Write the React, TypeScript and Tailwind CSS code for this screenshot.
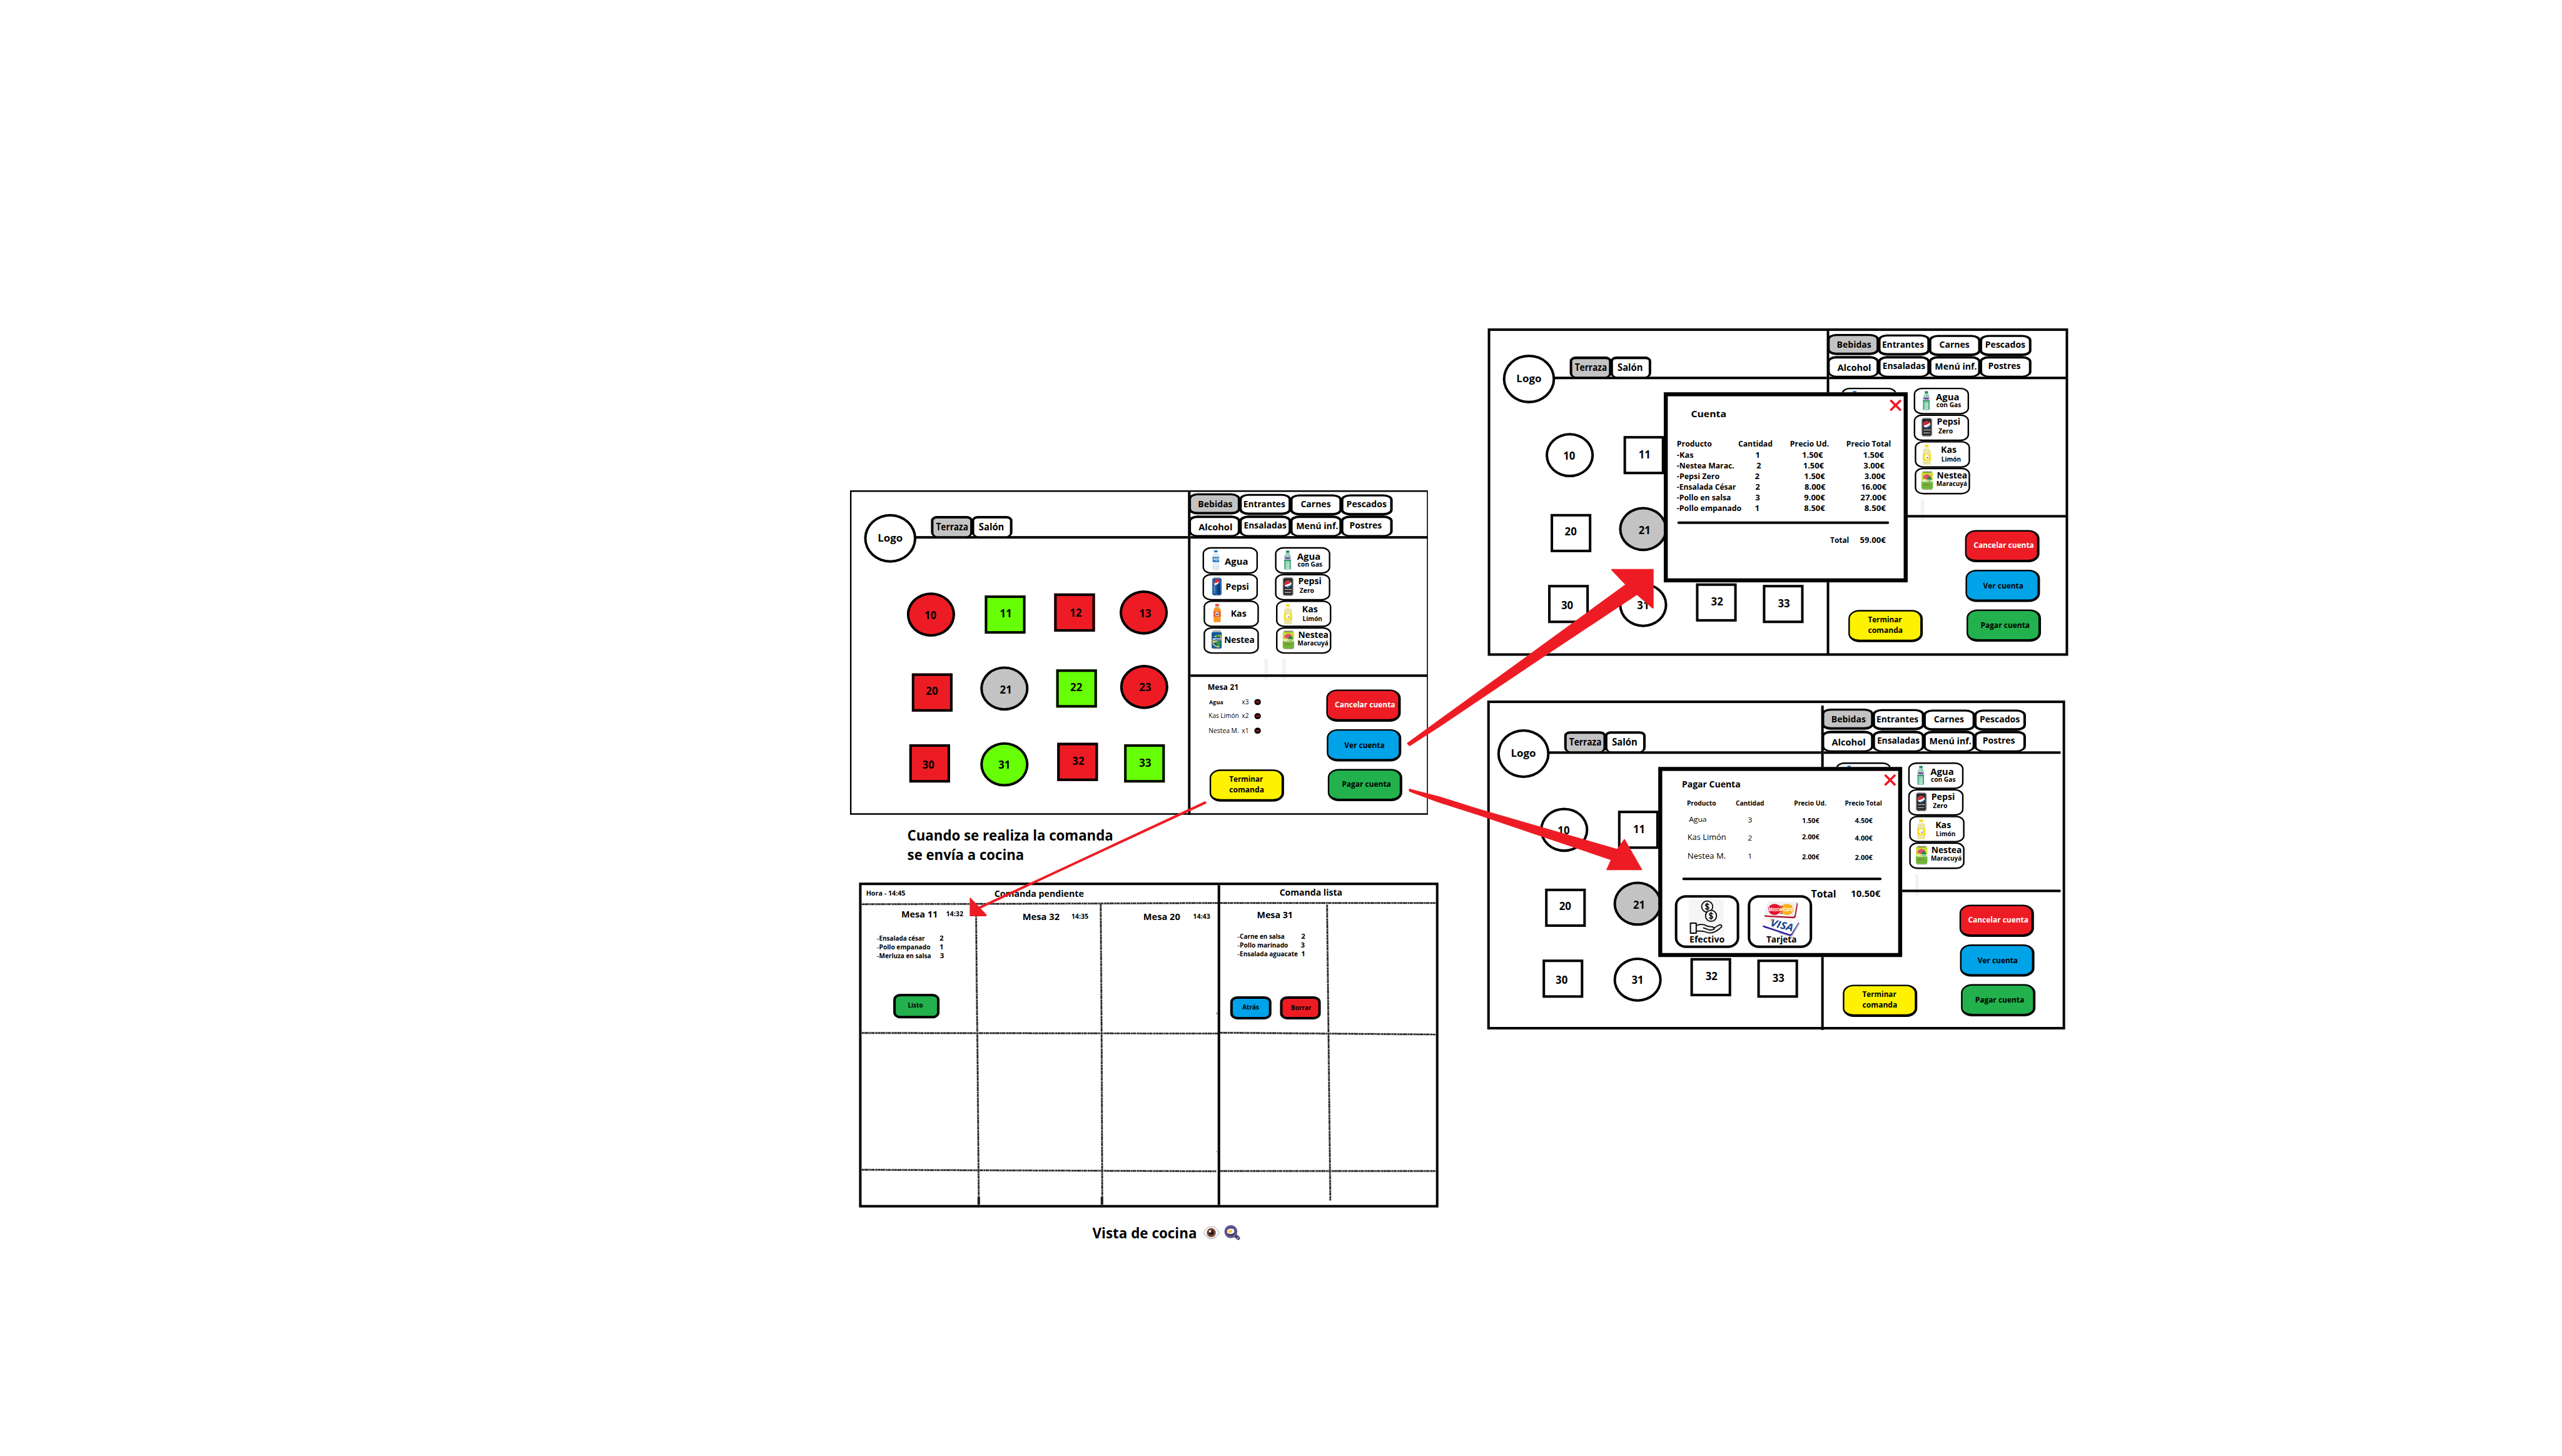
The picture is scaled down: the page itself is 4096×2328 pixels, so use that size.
import { useLayoutEffect, useRef } from "react";
import type { ReactNode } from "react";

/* ---------- text ---------- */

type LabelProps = {
  x?: number; // ink start, from the container's left edge
  b: number; // baseline, from the container's top edge
  s: number; // font size
  w?: number; // ink width the text is fitted to
  className?: string;
  children: string;
};

function Label({ x = 0, b, s, w, className = "font-bold", children }: LabelProps) {
  const outer = useRef<HTMLSpanElement>(null);
  const inner = useRef<HTMLSpanElement>(null);
  const width = w === undefined ? undefined : w + s * 0.09;

  useLayoutEffect(() => {
    if (width === undefined || !outer.current || !inner.current) return;
    inner.current.style.transform = "none";
    const unit = outer.current.getBoundingClientRect().width / width;
    const natural = inner.current.getBoundingClientRect().width / unit;
    inner.current.style.transform = `scaleX(${width / natural})`;
  }, [width]);

  return (
    <span
      ref={outer}
      className="relative col-start-1 row-start-1 block self-start justify-self-start leading-none whitespace-nowrap"
      style={{
        marginLeft: w === undefined ? x : x - s * 0.05,
        marginTop: b - s * 0.888,
        fontSize: s,
        width,
      }}
    >
      <span ref={inner} className={`inline-block origin-left align-top leading-none ${className}`}>
        {children}
      </span>
    </span>
  );
}

/* A sized area whose children share one grid cell: a shape below, labels above. */
function Box({ size, shape, children }: { size: string; shape?: string; children?: ReactNode }) {
  return (
    <div className={`grid shrink-0 ${size}`}>
      {shape && <div className={`col-start-1 row-start-1 border-black ${shape}`} />}
      {children}
    </div>
  );
}

/* ---------- floor plan ---------- */

type Table = { n: string; round?: boolean; x: number; y: number; dx: number; dy: number; color: string };

const tables: Table[] = [
  { n: "10", round: true, x: 113.2, y: 203.1, dx: -1.6, dy: 1.6, color: "bg-[#ed1c24]" },
  { n: "11", x: 268.1, y: 209.2, dx: 1, dy: -0.7, color: "bg-[#66ff05]" },
  { n: "12", x: 406, y: 204.9, dx: 2.5, dy: 1, color: "bg-[#ed1c24]" },
  { n: "13", round: true, x: 536, y: 198.8, dx: 3, dy: 2.8, color: "bg-[#ed1c24]" },
  { n: "20", x: 123, y: 364, dx: -0.7, dy: -1.6, color: "bg-[#ed1c24]" },
  { n: "21", round: true, x: 259.2, y: 350, dx: 2.4, dy: 3.4, color: "bg-[#c3c3c3]" },
  { n: "22", x: 410, y: 355.8, dx: -0.7, dy: -1.2, color: "bg-[#66ff05]" },
  { n: "23", round: true, x: 537, y: 347, dx: 2, dy: 1.6, color: "bg-[#ed1c24]" },
  { n: "30", x: 118, y: 505, dx: -2.5, dy: 3.6, color: "bg-[#ed1c24]" },
  { n: "31", round: true, x: 259, y: 501, dx: 0.4, dy: 1.6, color: "bg-[#66ff05]" },
  { n: "32", x: 412, y: 502, dx: 1.3, dy: -1.2, color: "bg-[#ed1c24]" },
  { n: "33", x: 545, y: 505, dx: 1.8, dy: -0.3, color: "bg-[#66ff05]" },
];

function TablePin({ table, colored }: { table: Table; colored: boolean }) {
  const fill = colored || table.n === "21" ? table.color : "bg-white";
  const cx = table.round ? 48 : 40.5;
  const cy = table.round ? 44 : 38;
  return (
    <div className="absolute" style={{ left: table.x, top: table.y }}>
      <Box
        size={table.round ? "h-[88px] w-[96px]" : "h-[76px] w-[81px]"}
        shape={`border-[5px] ${table.round ? "rounded-[50%]" : ""} ${fill}`}
      >
        <Label x={cx + table.dx - 11} b={cy + table.dy + 7.5} s={21} w={22}>
          {table.n}
        </Label>
      </Box>
    </div>
  );
}

function FloorPlan({ colored }: { colored: boolean }) {
  return (
    <div className="relative w-[672px] shrink-0">
      <div className="ml-[131px] flex h-[96px] items-start border-b-[5px] border-black pt-[51px] pl-[30px]">
        <Box
          size="h-[42px] w-[83px]"
          shape="rounded-[12px/9px] border-[5px] border-b-[2px] bg-[#c3c3c3]"
        >
          <Label x={11} b={29.8} s={19} w={62.5}>Terraza</Label>
        </Box>
        <div className="-ml-[2px]">
          <Box size="h-[42px] w-[81px]" shape="rounded-[12px/9px] border-[5px] border-b-[2px] bg-white">
            <Label x={15} b={29.4} s={19} w={48.7}>Salón</Label>
          </Box>
        </div>
      </div>
      <div className="absolute top-[47px] left-[28px]">
        <Box size="h-[97px] w-[104px]" shape="rounded-[50%] border-[5px] bg-white">
          <Label x={27.6} b={55} s={20.5} w={48}>Logo</Label>
        </Box>
      </div>
      {tables.map((t) => (
        <TablePin key={t.n} table={t} colored={colored} />
      ))}
    </div>
  );
}

/* ---------- menu ---------- */

const categories = [
  [
    { name: "Bebidas", top: 6, x: 20, b: 28, w: 67 },
    { name: "Entrantes", top: 7, x: 9, b: 28, w: 81.7 },
    { name: "Carnes", top: 8, x: 22.3, b: 27, w: 58.3 },
    { name: "Pescados", top: 8, x: 12, b: 27, w: 78.3 },
  ],
  [
    { name: "Alcohol", top: 0, x: 20.7, b: 30.3, w: 65.7 },
    { name: "Ensaladas", top: 0, x: 10, b: 27, w: 83.3 },
    { name: "Menú inf.", top: 0, x: 13, b: 27.7, w: 82 },
    { name: "Postres", top: 0, x: 17.7, b: 27, w: 62.7 },
  ],
];

function Categories() {
  return (
    <div className="-ml-[4px] flex h-[91px] flex-col">
      {categories.map((row, r) => (
        <div key={r} className={r === 0 ? "flex h-[50px]" : "flex"}>
          {row.map((c) => (
            <div key={c.name} className="-mr-[2px]" style={{ marginTop: c.top }}>
              <Box
                size={r === 0 ? "h-[42px] w-[103px]" : "h-[42px] w-[103px]"}
                shape={
                  r === 0
                    ? c.name === "Bebidas"
                      ? "rounded-[18px/11px] border-[5px] border-t-[4px] bg-[#c3c3c3]"
                      : "rounded-[18px/11px] border-[5px] border-t-[4px] bg-white"
                    : "rounded-[18px/11px] border-[5px] border-b-[3px] bg-white"
                }
              >
                <Label x={c.x} b={c.b} s={18.6} w={c.w}>{c.name}</Label>
              </Box>
            </div>
          ))}
        </div>
      ))}
    </div>
  );
}

function WaterBottle() {
  return (
    <>
      <rect x="23" y="6.5" width="7" height="3.5" fill="#1c6fc0" />
      <path d="M23.5 10h6l1 4 2.5 4v27q-6.500 1.500-13 0V18l2.500-4z" fill="#e3eff7" />
      <path d="M22 14l-1.500 5M31 14l1.500 5M21 35v9M32 35v9M26.500 12v6M24 38h5M25 42h4" stroke="#b5d0e2" strokeWidth="1" fill="none" />
      <rect x="20" y="19.500" width="13" height="10" fill="#1a6fc4" />
      <text x="21" y="26.500" fontSize="6" fontWeight="700" fill="#fff" fontStyle="italic">AQUA</text>
      <path d="M20.500 47h12" stroke="#edf3f6" strokeWidth="2" />
    </>
  );
}

function SparklingBottle() {
  return (
    <>
      <rect x="22" y="7" width="6.500" height="4" fill="#137a4b" />
      <path d="M22 11h6.500l1.500 4 1.500 4v25q-6.500 2-13 0V19l1.500-4z" fill="#8fd0b4" />
      <path d="M19.500 18v26M30.500 18v26" stroke="#2d9268" strokeWidth="1.500" />
      <path d="M23 13v5M24 32v10M27 30v12M22 42h6" stroke="#c9ecdc" strokeWidth="1.300" />
      <rect x="18.500" y="18.500" width="13" height="6.500" fill="#d9d3ea" />
      <path d="M20 23l2-3 2 3 2-3 2 3 2-3" stroke="#573c8c" strokeWidth="1.800" fill="none" />
      <rect x="18.500" y="25" width="13" height="2" fill="#1c8a58" />
    </>
  );
}

function PepsiCan() {
  return (
    <>
      <rect x="21" y="7" width="15" height="37" rx="2" fill="#9fb4c6" />
      <rect x="19" y="9" width="19" height="33" rx="2.500" fill="#17569f" />
      <path d="M20.500 11v30M36.500 11v30" stroke="#3f8bd0" strokeWidth="1.500" />
      <path d="M31 22v19M34 20v21" stroke="#0d2f66" strokeWidth="2" />
      <path d="M25 12q5-3 8 0 1 6-3 8-4 1-6 3-2-6 1-11z" fill="#e32934" />
      <path d="M23.500 18q3 2 9-3-1 6-8.500 8z" fill="#fff" />
      <path d="M24 24v15" stroke="#cfe2f5" strokeWidth="1.500" strokeDasharray="2 1" />
    </>
  );
}

function PepsiZeroCan() {
  return (
    <>
      <rect x="13" y="5" width="26" height="40" fill="#f5f5f5" />
      <rect x="17.500" y="7" width="17" height="37" rx="2" fill="#8b8b8b" />
      <rect x="16" y="9" width="20" height="33" rx="2" fill="#262626" />
      <path d="M17.500 10v31M34.500 10v31" stroke="#5b5b5b" strokeWidth="1.300" />
      <circle cx="26" cy="20.500" r="7" fill="#fff" />
      <path d="M19.200 20a7 7 0 0 1 12.500-3.500q-3 4-12.500 6z" fill="#d8232f" />
      <path d="M21 25.500q8 0 11.900-5.500a7 7 0 0 1-11.900 5.500z" fill="#194f93" />
      <path d="M20 31h13M20 37h12" stroke="#e9e9e9" strokeWidth="1.800" strokeDasharray="2.500 1" />
    </>
  );
}

function KasOrangeBottle() {
  return (
    <>
      <rect x="23.500" y="7" width="7" height="4" fill="#ea4a2b" />
      <path d="M24 11h6l1 3 3 4v24q-1 2-3 1h-8q-2 1-3-1V18l3-4z" fill="#f6962a" />
      <path d="M24 11h6l1 4h-8z" fill="#d9b79b" />
      <rect x="20" y="22" width="14" height="10" fill="#e2522c" />
      <circle cx="27" cy="27" r="4" fill="#f6dcd0" />
      <path d="M24.500 26.500l2.500 2 2.500-3" stroke="#2c3b73" strokeWidth="1.700" fill="none" />
    </>
  );
}

function KasLemonBottle() {
  return (
    <>
      <rect x="20" y="7.500" width="7.500" height="4.500" fill="#fbdc12" />
      <path d="M20 12h7.500l1 3 3.500 4v28H16V19l3-4z" fill="#ebe4a4" />
      <path d="M20 12h7l1 4h-9z" fill="#f6f3da" />
      <rect x="16" y="26" width="16" height="12" fill="#fbdd14" />
      <circle cx="24" cy="31.500" r="4.500" fill="#fff" />
      <path d="M21 30.500q3 4 7 0l-2.500 4z" fill="#1c3f7d" />
    </>
  );
}

function NesteaCan() {
  return (
    <>
      <rect x="17.500" y="6" width="17" height="38" rx="2" fill="#b9bec4" />
      <rect x="16" y="10" width="20" height="32" rx="2" fill="#14589d" />
      <path d="M17 25q2-9 16-10l2 4q-4 13-17 12z" fill="#f0de3c" />
      <path d="M26 15l7 2-1 8-7-2zM24 30l9-3 1 8-6 5z" fill="#2f9a3c" />
      <rect x="17.500" y="19.500" width="17" height="8" rx="3" fill="#123f80" />
      <text x="18" y="26" fontSize="5.500" fontWeight="700" fill="#fff">NESTEA</text>
      <path d="M18 32q4 8 14 7" stroke="#f2e246" strokeWidth="2" fill="none" />
    </>
  );
}

function NesteaPassionCan() {
  return (
    <>
      <rect x="15" y="7" width="20" height="37" rx="2" fill="#9aa695" />
      <rect x="13.500" y="9" width="22.500" height="33" rx="2" fill="#c9dd2f" />
      <path d="M13.500 27h22.500v13q0 2-2 2H15.500q-2 0-2-2z" fill="#6cb536" />
      <path d="M16 20q2-7 9-7 7 2 8 8l-8 3z" fill="#ec4a7c" />
      <path d="M25 19l5-2 4 6-3 5-6-2z" fill="#238a3a" />
      <text x="14.500" y="28.500" fontSize="6" fontWeight="700" fill="#fff">NESTEA</text>
      <path d="M18 34h12" stroke="#c62a4d" strokeWidth="1.200" strokeDasharray="2 1" />
      <path d="M17 9.500h15" stroke="#54741d" strokeWidth="1" />
    </>
  );
}

type Drink = {
  name: string;
  x: number;
  b: number;
  w: number;
  sub?: { name: string; x: number; b: number; w: number };
  shift: boolean;
  Icon: () => ReactNode;
};

const drinks: Drink[][] = [
  [
    { name: "Agua", x: 44.7, b: 35.3, w: 45, shift: false, Icon: WaterBottle },
    { name: "Pepsi", x: 46.7, b: 32.3, w: 44.7, shift: false, Icon: PepsiCan },
    { name: "Kas", x: 54.7, b: 33, w: 29.7, shift: true, Icon: KasOrangeBottle },
    { name: "Nestea", x: 42.3, b: 31.3, w: 58.7, shift: true, Icon: NesteaCan },
  ],
  [
    { name: "Agua", x: 44.7, b: 25.3, w: 45, sub: { name: "con Gas", x: 45.7, b: 40, w: 48 }, shift: false, Icon: SparklingBottle },
    { name: "Pepsi", x: 46.7, b: 22, w: 45, sub: { name: "Zero", x: 49.3, b: 39, w: 27.7 }, shift: false, Icon: PepsiZeroCan },
    { name: "Kas", x: 53, b: 25, w: 29.5, sub: { name: "Limón", x: 53.7, b: 42, w: 37.7 }, shift: true, Icon: KasLemonBottle },
    { name: "Nestea", x: 44.7, b: 22, w: 58.7, sub: { name: "Maracuyá", x: 43.7, b: 37, w: 60 }, shift: true, Icon: NesteaPassionCan },
  ],
];

function Drinks() {
  return (
    <div className="relative flex h-[270px] gap-[34px] pt-[17px] pl-[24px]">
      {drinks.map((column, i) => (
        <div key={i} className="flex w-[110px] flex-col">
          {column.map((d) => (
            <div key={d.name} className={d.shift ? "ml-[2px]" : ""}>
              <Box size="h-[53px] w-[110px]" shape="rounded-[17px/13px] border-[3px] bg-white">
                <svg className="col-start-1 row-start-1" width="40" height="53" viewBox="0 0 40 53">
                  <d.Icon />
                </svg>
                <Label x={d.x} b={d.b} s={18.6} w={d.w}>{d.name}</Label>
                {d.sub && (
                  <Label x={d.sub.x} b={d.sub.b} s={13.5} w={d.sub.w}>{d.sub.name}</Label>
                )}
              </Box>
            </div>
          ))}
        </div>
      ))}
      <div className="absolute top-[239px] left-[147px] h-[41px] w-[42px] border-x-[7px] border-b border-[#f2f2f2]" />
    </div>
  );
}

/* ---------- order ---------- */

const orderLines = [
  { name: "Agua", qty: "x3", x: 38, b: 54.7, w: 27.3, s: 11.5, dot: 44, weight: "font-bold" },
  { name: "Kas Limón", qty: "x2", x: 36.7, b: 83, w: 59, s: 12.5, dot: 72, weight: "font-normal" },
  { name: "Nestea M.", qty: "x1", x: 36.7, b: 112.7, w: 59, s: 12.5, dot: 101, weight: "font-normal" },
];

function ActionButton({ color, children }: { color: string; children: ReactNode }) {
  return (
    <Box size="h-[64px] w-[148px]" shape={`rounded-[22px/17px] border-t-[3px] border-r-[5px] border-b-[5px] border-l-[3px] ${color}`}>
      {children}
    </Box>
  );
}

function OrderPanel() {
  return (
    <div className="flex h-[274px]">
      <div className="flex w-[270px] flex-col">
        <div className="grid h-[184px]">
          <Label x={34.7} b={26.3} s={16} w={60.3}>Mesa 21</Label>
          {orderLines.map((l) => (
            <div key={l.name} className="col-start-1 row-start-1 grid">
              <Label x={l.x} b={l.b} s={l.s} w={l.w} className={l.weight}>{l.name}</Label>
              <Label x={102.7} b={l.b} s={12.5} w={12.7} className="font-normal">{l.qty}</Label>
              <div
                className="col-start-1 row-start-1 ml-[127px] flex h-[12px] w-[13px] items-center justify-center rounded-full bg-black"
                style={{ marginTop: l.dot }}
              >
                <div className="h-[2px] w-[8px] bg-[#ed1c24]" />
              </div>
            </div>
          ))}
        </div>
        <div className="pl-[38px]">
          <ActionButton color="bg-[#fff200]">
            <Label x={39.7} b={24} s={14.6} w={66}>Terminar</Label>
            <Label x={39.7} b={45.7} s={14.6} w={68}>comanda</Label>
          </ActionButton>
        </div>
      </div>
      <div className="flex flex-col gap-[15px] pt-[25px]">
        <ActionButton color="bg-[#ed1c24]">
          <Label x={17.3} b={35} s={14.6} w={118.7} className="font-bold text-white">Cancelar cuenta</Label>
        </ActionButton>
        <div className="ml-px">
          <ActionButton color="bg-[#00a2e8]">
            <Label x={35.7} b={37} s={14.6} w={78.7}>Ver cuenta</Label>
          </ActionButton>
        </div>
        <div className="ml-[3px]">
          <ActionButton color="bg-[#22b14c]">
            <Label x={29} b={36} s={14.6} w={96.3}>Pagar cuenta</Label>
          </ActionButton>
        </div>
      </div>
    </div>
  );
}

function Screen({ place, frame, divider = "", colored = false, children }: {
  place: string;
  frame: string;
  divider?: string;
  colored?: boolean;
  children?: ReactNode;
}) {
  return (
    <section className={`absolute h-[645px] w-[1148px] ${place}`}>
      <div className={`absolute border-black ${frame}`} />
      <div className="relative flex h-full">
        <FloorPlan colored={colored} />
        <div className={`w-[5px] shrink-0 bg-black ${divider}`} />
        <div className="flex w-[471px] flex-col">
          <Categories />
          <div className="h-[5px] bg-black" />
          <Drinks />
          <div className="relative h-[5px] bg-black" />
          <OrderPanel />
        </div>
      </div>
      {children}
    </section>
  );
}

/* ---------- dialogs ---------- */

function Dialog({ children }: { children: ReactNode }) {
  return (
    <div className="absolute top-[122px] left-[348px] h-[378px] w-[485px] border-[8px] border-black bg-white">
      <svg className="absolute top-[6px] left-[441px]" width="24" height="24" viewBox="0 0 24 24">
        <path d="M3 3l18 18M21 3L3 21" stroke="#ed1c24" strokeWidth="4.500" strokeLinecap="round" />
      </svg>
      {children}
    </div>
  );
}

const billRows = [
  { name: "-Kas", w: 31.7, q: "1", qc: 179, unit: "1.50€", ux: 268, total: "1.50€", tx: 388.7, tw: 40.3 },
  { name: "-Nestea Marac.", w: 113, q: "2", qc: 180.3, unit: "1.50€", ux: 269.5, total: "3.00€", tx: 390, tw: 40.3 },
  { name: "-Pepsi Zero", w: 83.5, q: "2", qc: 178, unit: "1.50€", ux: 272, total: "3.00€", tx: 392, tw: 40.3 },
  { name: "-Ensalada César", w: 116, q: "2", qc: 179, unit: "8.00€", ux: 272.7, total: "16.00€", tx: 385, tw: 49.3 },
  { name: "-Pollo en salsa", w: 106.3, q: "3", qc: 178.5, unit: "9.00€", ux: 272, total: "27.00€", tx: 383.7, tw: 50 },
  { name: "-Pollo empanado", w: 127.2, q: "1", qc: 177.6, unit: "8.50€", ux: 271.3, total: "8.50€", tx: 391.3, tw: 41 },
];

function BillDialog() {
  return (
    <Dialog>
      <div className="grid h-[85px]">
        <Label x={46.8} b={41.5} s={18.6} w={68.7}>Cuenta</Label>
      </div>
      <div className="grid h-[21.4px]">
        <Label x={18.6} b={16} s={15.6} w={68.3}>Producto</Label>
        <Label x={140.5} b={16} s={15.6} w={67}>Cantidad</Label>
        <Label x={243.6} b={16} s={15.6} w={76}>Precio Ud.</Label>
        <Label x={356} b={16} s={15.6} w={87.3}>Precio Total</Label>
      </div>
      {billRows.map((r) => (
        <div key={r.name} className="grid h-[21.4px]">
          <Label x={18.6} b={16} s={15.6} w={r.w}>{r.name}</Label>
          <Label x={r.qc - 4} b={16} s={15.6} w={8}>{r.q}</Label>
          <Label x={r.ux} b={16} s={15.6} w={40}>{r.unit}</Label>
          <Label x={r.tx} b={16} s={15.6} w={r.tw}>{r.total}</Label>
        </div>
      ))}
      <div className="mt-[14px] ml-[18.600px] h-[5.500px] w-[421px] rounded-full bg-black" />
      <div className="grid">
        <Label x={323.3} b={38.7} s={15.6} w={36}>Total</Label>
        <Label x={382.3} b={38.7} s={15.6} w={49.7}>59.00€</Label>
      </div>
    </Dialog>
  );
}

const payRows = [
  { h: "h-[36px]", name: "Agua", x: 53.3, b: 21.5, w: 34, s: 14.5, q: "3", qb: 23, unit: "1.50€", ux: 278.8, ub: 24, total: "4.50€", tb: 25 },
  { h: "h-[38px]", name: "Kas Limón", x: 50.6, b: 21.5, w: 75.5, s: 16.5, q: "2", qb: 23, unit: "2.00€", ux: 278.3, ub: 21, total: "4.00€", tb: 22.4 },
  { h: "h-[58px]", name: "Nestea M.", x: 50.6, b: 21.7, w: 75, s: 16.5, q: "1", qb: 22, unit: "2.00€", ux: 279, ub: 23, total: "2.00€", tb: 24 },
];

function CoinsInHand() {
  return (
    <svg className="col-start-1 row-start-1" width="127" height="105" viewBox="0 0 127 105">
      <rect x="28" y="8" width="69" height="71" fill="#f5f5f5" />
      <g fill="none" stroke="#000" strokeWidth="2.200" strokeLinecap="round" strokeLinejoin="round">
        <circle cx="64.300" cy="22.700" r="11" />
        <circle cx="72" cy="41" r="11" fill="#f5f5f5" />
        <path d="M67.500 19q-3-3-6-.500-1.500 3 3 4.200 4.500 1.500 2.500 4.500-3 2-6-.700M64.300 15.500v14.500" strokeWidth="1.900" />
        <path d="M75.200 37.300q-3-3-6-.500-1.500 3 3 4.200 4.500 1.500 2.500 4.500-3 2-6-.700M72 33.800v14.500" strokeWidth="1.900" />
        <path d="M31 55.500h11.500v20H31z" strokeWidth="2.400" />
        <path d="M43.500 60q9-3 17-.500 5 3 14 3.500 4 1 3.500 4.500-5 3-10 1.500l-11-4" />
        <path d="M78 65.500q5-4 11-6.500 5-.500 4 4-9 9-18 11.500-6 1.500-14-1.500-8-2.500-17.500-1.500" />
      </g>
    </svg>
  );
}

function CreditCards() {
  return (
    <svg className="col-start-1 row-start-1" width="127" height="105" viewBox="0 0 127 105">
      <path d="M44 48l60 8-16 28-26-8z" fill="#000" opacity=".25" />
      <path d="M41.700 46.500q1.500-3.500 5-3l52 8q3.500.800 2.500 4L87.500 79q-1.500 2.500-4.500 1.500L32 64q-3-1-1.700-4z" fill="#2b1a9e" />
      <path d="M41.700 44q1.500-3 5-2.500l52 8q3.500.800 2.500 4L87 76q-1.500 2.300-4.500 1.300L32 60.500q-3-1-1.700-3.500z" fill="#fbfbfc" />
      <path d="M45 46l4 1-2 8z" fill="#f2a93b" />
      <text x="44" y="61" fontSize="20" fontWeight="700" fontStyle="italic" fill="#15478f" textLength="46" lengthAdjust="spacingAndGlyphs" transform="rotate(14 44 61)">
        VISA
      </text>
      <path d="M40 16.500q1-3 4-3l52 1.500q4 .200 3.300 4l-4 24q-.700 3-4 2.800l-55-2.500q-4-.300-3-4z" fill="#b3122b" />
      <path d="M40 15q1-3 4-2.800l50 1.300q4 .200 3.300 4l-4 22.500q-.700 3-4 2.800l-53-2.300q-4-.300-3-4z" fill="#eef0f3" />
      <ellipse cx="53.300" cy="28.300" rx="12.700" ry="11" fill="#e4112d" />
      <ellipse cx="78" cy="28.300" rx="13.300" ry="11" fill="#f9b21c" />
      <path d="M63 22h6M63 25.500h6M63 32.500h6M64 36h5" stroke="#e4112d" strokeWidth="1.800" />
      <text x="41" y="32" fontSize="10" fontWeight="700" fontStyle="italic" fill="#fff" textLength="49" lengthAdjust="spacingAndGlyphs">
        MasterCard
      </text>
    </svg>
  );
}

function PayDialog() {
  return (
    <Dialog>
      <div className="grid h-[54px]">
        <Label x={39.5} b={34} s={17.8} w={115}>Pagar Cuenta</Label>
      </div>
      <div className="grid h-[26px]">
        <Label x={49.3} b={16} s={13.2} w={56.7}>Producto</Label>
        <Label x={147} b={16} s={13.2} w={55.4}>Cantidad</Label>
        <Label x={262.7} b={16} s={13.2} w={63}>Precio Ud.</Label>
        <Label x={363.7} b={16} s={13.2} w={72.7}>Precio Total</Label>
      </div>
      {payRows.map((r) => (
        <div key={r.name} className={`grid ${r.h}`}>
          <Label x={r.x} b={r.b} s={r.s} w={r.w} className="font-normal">{r.name}</Label>
          <Label x={171} b={r.qb} s={14.5} w={7.5} className="font-normal">{r.q}</Label>
          <Label x={r.ux} b={r.ub} s={13.4} w={33}>{r.unit}</Label>
          <Label x={384} b={r.tb} s={13.4} w={34}>{r.total}</Label>
        </div>
      ))}
      <div className="ml-[40px] h-[5px] w-[396px] rounded-full bg-black" />
      <div className="flex items-start gap-[17px] pt-[30px] pl-[25px]">
        <Box size="h-[105px] w-[128px]" shape="rounded-[22px/20px] border-[5px] bg-white">
          <CoinsInHand />
          <Label x={30} b={95} s={17.6} w={68.3}>Efectivo</Label>
        </Box>
        <Box size="h-[105px] w-[128px]" shape="rounded-[22px/20px] border-[5px] bg-white">
          <CreditCards />
          <Label x={37.5} b={94.6} s={17.6} w={58.5}>Tarjeta</Label>
        </Box>
        <div className="-ml-[17px] grid">
          <Label x={-1} b={4} s={20.5} w={48}>Total</Label>
          <Label x={78.3} b={3.7} s={17.8} w={57}>10.50€</Label>
        </div>
      </div>
    </Dialog>
  );
}

/* ---------- kitchen ---------- */

function Dish({ name, w, q, qc, x }: { name: string; w: number; q: string; qc: number; x: number }) {
  return (
    <div className="grid h-[17.500px]">
      <Label x={x} b={13} s={13} w={4} className="font-normal">-</Label>
      <Label x={x + 5} b={13} s={13} w={w - 5}>{name}</Label>
      <Label x={qc - 3.5} b={13} s={13} w={7}>{q}</Label>
    </div>
  );
}

function Rough({ d }: { d: string }) {
  return (
    <>
      <path d={d} stroke="#b4b4b4" strokeWidth="4.500" fill="none" />
      <path d={d} stroke="#1c1c1c" strokeWidth="2.800" fill="none" strokeDasharray="5 1 8 1.500 3 1 6 2 4 1" />
    </>
  );
}

function Kitchen() {
  return (
    <section className="absolute top-[1755px] left-[1708px] flex h-[646px] w-[1152px] border-[5px] border-black">
      <svg className="absolute top-0 left-0" width="1142" height="636" viewBox="0 0 1142 636">
        <Rough d="M0 38L340 37 708 35.500" />
        <Rough d="M713 35.500H1142" />
        <Rough d="M0 294L708 295" />
        <Rough d="M713 293.500L1142 297" />
        <Rough d="M0 566L705 569" />
        <Rough d="M713 568.500H1142" />
        <Rough d="M227.500 38L229 200 230.500 330 233 620" />
        <Rough d="M475.500 38L477.500 330 478.500 620" />
        <Rough d="M925.500 39L929 350 932 627" />
        <path d="M233 620v16M478 620v16" stroke="#1c1c1c" strokeWidth="5" />
        <path d="M706 253v4M705.500 529v2" stroke="#555" strokeWidth="1.500" />
      </svg>
      <div className="relative w-[708px]">
        <div className="grid h-[37px]">
          <Label x={10} b={22} s={13} w={77}>Hora - 14:45</Label>
          <Label x={264.6} b={23} s={17.4} w={176.4}>Comanda pendiente</Label>
        </div>
        <div className="flex">
          <div className="w-[228px]">
            <div className="grid h-[61px]">
              <Label x={79.5} b={27.7} s={17.4} w={70.8}>Mesa 11</Label>
              <Label x={168.7} b={26} s={13.4} w={33}>14:32</Label>
            </div>
            <Dish x={31} name="Ensalada césar" w={94.5} q="2" qc={158.7} />
            <Dish x={31} name="Pollo empanado" w={105.7} q="1" qc={159} />
            <Dish x={31} name="Merluza en salsa" w={107} q="3" qc={160.4} />
            <div className="pt-[65px] pl-[63px]">
              <Box size="h-[49px] w-[92px]" shape="rounded-[14px/12px] border-[5px] bg-[#22b14c]">
                <Label x={29.5} b={28} s={13} w={29}>Listo</Label>
              </Box>
            </div>
          </div>
          <div className="grid w-[248px]">
            <Label x={93.3} b={32} s={17.4} w={72.2}>Mesa 32</Label>
            <Label x={189.8} b={31} s={13.4} w={33}>14:35</Label>
          </div>
          <div className="grid">
            <Label x={84.8} b={32} s={17.4} w={72}>Mesa 20</Label>
            <Label x={184} b={31} s={13.4} w={33}>14:43</Label>
          </div>
        </div>
      </div>
      <div className="relative w-[5px] bg-black" />
      <div className="relative flex-1">
        <div className="grid h-[37px]">
          <Label x={118.7} b={21.5} s={17.4} w={123.3}>Comanda lista</Label>
        </div>
        <div className="grid h-[57.5px]">
          <Label x={74} b={29.8} s={17.4} w={70}>Mesa 31</Label>
        </div>
        <Dish x={34.7} name="Carne en salsa" w={93} q="2" qc={164.7} />
        <Dish x={34.7} name="Pollo marinado" w={100} q="3" qc={164} />
        <Dish x={34.7} name="Ensalada aguacate" w={119.3} q="1" qc={165.3} />
        <div className="flex gap-[17px] pt-[74px] pl-[20px]">
          <Box size="h-[46px] w-[82px]" shape="rounded-[14px/12px] border-[5px] bg-[#00a2e8]">
            <Label x={24.3} b={26.6} s={13} w={32.3}>Atrás</Label>
          </Box>
          <Box size="h-[46px] w-[81px]" shape="rounded-[14px/12px] border-[5px] bg-[#ed1c24]">
            <Label x={22.3} b={28} s={13} w={39.3}>Borrar</Label>
          </Box>
        </div>
      </div>
    </section>
  );
}

function Eye() {
  return (
    <svg width="33" height="26" viewBox="0 0 33 26">
      <path d="M.800 13Q7 .800 16.500.800T32.200 13Q26 25.200 16.500 25.200T.800 13z" fill="#fff" stroke="#8b8b8b" strokeWidth="1" />
      <path d="M2.500 14q5 9 14 9.800Q25 23 30.500 14q-4 6-14 6t-14-6z" fill="#dedede" />
      <circle cx="16.300" cy="13" r="9" fill="#7d4533" />
      <circle cx="16.300" cy="13" r="4.800" fill="#1d1a1a" />
      <path d="M12 8.500h4v4h-4z" fill="#fff" />
    </svg>
  );
}

function FryingPan() {
  return (
    <svg width="32" height="30" viewBox="0 0 32 30">
      <path d="M21 20l7 6" stroke="#433b6b" strokeWidth="7" strokeLinecap="round" />
      <circle cx="13.300" cy="13" r="13" fill="#635994" />
      <circle cx="13.300" cy="13" r="8.800" fill="#433b6b" />
      <path d="M7 9q3-3 8-2 5 0 5 4 1 4-2 5-4 3-8 1-5 0-4-3-1-3 1-5z" fill="#fff" />
      <ellipse cx="12" cy="12.300" rx="3.600" ry="3.200" fill="#fcc32c" />
      <circle cx="27.300" cy="25.700" r="1.300" fill="#fff" />
    </svg>
  );
}

/* ---------- flow arrows ---------- */

function Arrows() {
  return (
    <svg className="pointer-events-none absolute top-0 left-0" width="5094" height="2895" viewBox="0 0 5094 2895" fill="#ed1c24">
      <path d="M2396 1596L1945 1806" stroke="#ed1c24" strokeWidth="5" strokeLinecap="round" />
      <path d="M1929 1786l32 33.500-1 1.500h-31z" stroke="#ed1c24" strokeWidth="2" strokeLinejoin="round" />
      <path d="M2798 1478L2860 1433 3016 1320 3232.400 1162.500 3204.500 1133.500V1132h82.500v77h-1.500L3254.700 1182 3047 1320 2860 1446 2802.500 1483z" stroke="#ed1c24" strokeWidth="1.500" strokeLinejoin="round" />
      <path d="M2802 1569L2860 1584 2940 1609 3215.400 1689 3229.700 1669 3264.500 1729.500H3194.500L3203.400 1709.600 2940 1620.500 2860 1595 2812 1577 2802 1573z" stroke="#ed1c24" strokeWidth="1.500" strokeLinejoin="round" />
    </svg>
  );
}

export default function App() {
  return (
    <main className="h-[2328px] w-[4096px] overflow-hidden bg-white">
      <div className="relative h-[2895px] w-[5094px] origin-top-left scale-[0.8041] bg-white font-['Open_Sans','Noto_Sans',sans-serif] text-black">
        <Screen
          colored
          place="top-[975px] left-[1690px]"
          frame="top-0 left-0 h-[645px] w-[1149px] border-[3px] border-r-[2px]"
        />
        <Screen place="top-[658px] left-[2960px]" frame="-top-[5px] -left-[2px] h-[651px] w-[1154px] border-[5px]">
          <BillDialog />
        </Screen>
        <Screen
          place="top-[1403px] left-[2949px]"
          frame="-top-[10px] left-[8px] h-[654px] w-[1149px] border-[5px]"
        >
          <PayDialog />
        </Screen>

        <div className="absolute top-[1640px] left-[1805px] flex flex-col">
          <div className="grid h-[39px]">
            <Label b={30.5} s={29} w={406.7}>Cuando se realiza la comanda</Label>
          </div>
          <div className="grid h-[39px]">
            <Label b={30.5} s={29} w={229.5}>se envía a cocina</Label>
          </div>
        </div>

        <Kitchen />

        <div className="absolute top-[2436px] left-[2173px] flex items-center gap-[9px]">
          <div className="grid w-[210px]">
            <Label b={25} s={29} w={205}>Vista de cocina</Label>
          </div>
          <Eye />
          <FryingPan />
        </div>

        <Arrows />
      </div>
    </main>
  );
}
